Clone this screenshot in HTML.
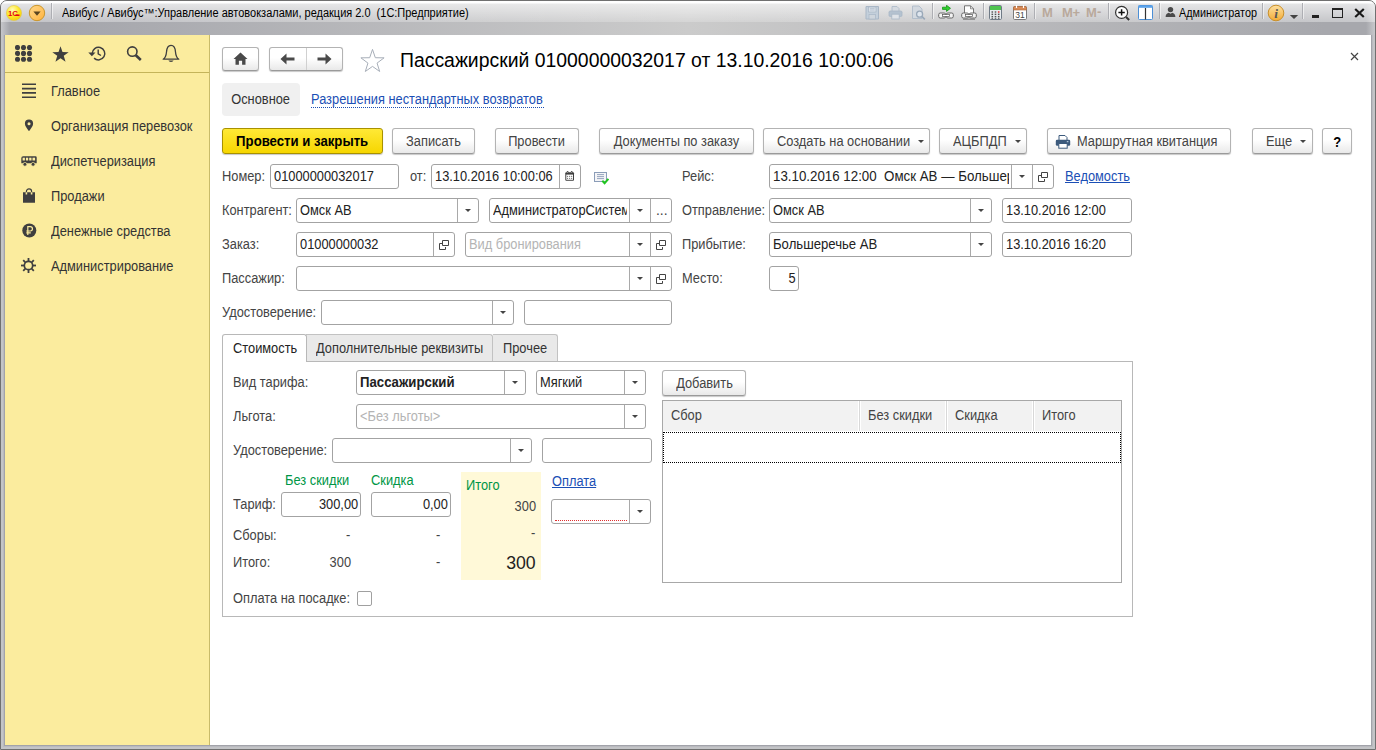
<!DOCTYPE html>
<html lang="ru">
<head>
<meta charset="utf-8">
<title>Авибус</title>
<style>
*{box-sizing:border-box;margin:0;padding:0}
html,body{width:1376px;height:750px;overflow:hidden;background:#fff}
body{position:relative;font-family:"Liberation Sans",Arial,sans-serif;font-size:13.8px;color:#333;background:#fff}
.abs,.abs>*{position:absolute}
#win{position:absolute;left:0;top:0;width:1376px;height:750px;border:1px solid #707070;border-radius:7px 7px 0 0;overflow:hidden;background:#c3c4c7}
#tbar{position:absolute;left:0;top:0;width:1374px;height:34px;background:linear-gradient(90deg,#c6c7cb 0,#a4a5ab 9px,#a4a5ab 50px,#cbcbcb 50%,#a7a8ad 1324px,#a7a8ad 1365px,#c8c9cc 1374px)}
#tbar:before{content:"";position:absolute;left:0;top:0;width:100%;height:21px;background:linear-gradient(#fff 0,#fff 2px,rgba(255,255,255,.62) 3px,rgba(255,255,255,.22) 20px,rgba(255,255,255,.2) 21px),linear-gradient(90deg,rgba(255,255,255,.2),rgba(255,255,255,0) 50%,rgba(255,255,255,.2))}
#ttl{position:absolute;left:61px;top:5px;font-size:12px;line-height:15px;white-space:pre;color:#000;transform-origin:0 0;transform:scaleX(.915)}
#side{position:absolute;left:4px;top:34px;width:205px;height:710px;background:#fbec9e;border-right:1px solid #c9bb6a}
#side .sep{position:absolute;left:0;top:37px;width:204px;height:1px;background:#c4b45a}
.mi{position:absolute;left:46px;font-size:13.8px;line-height:16px;color:#333;white-space:nowrap}
#main{position:absolute;left:209px;top:34px;width:1161px;height:710px;background:#fff}
/* everything inside #pg is in page coordinates */
#pg{position:absolute;left:-1px;top:-1px;width:1376px;height:750px}
#pg>*{position:absolute}
.btn{height:26px;padding-top:1px;border:1px solid #b3b3b3;border-bottom-color:#9a9a9a;border-radius:3px;background:linear-gradient(#fff 0,#fff 45%,#e9e9e9 100%);box-shadow:0 1px 1px rgba(0,0,0,.22);font-size:13.8px;line-height:24px;color:#444;text-align:center;white-space:nowrap}
.btn.y{background:linear-gradient(#ffe936,#f6d600);border-color:#a89100;color:#000;font-weight:bold}
.f{height:25px;border:1px solid #a3a3a3;border-radius:3px;background:#fff;font-size:13.8px;line-height:23px;color:#222;padding-left:3px;white-space:nowrap;overflow:hidden}
.f .t{position:absolute;left:3px;top:0;overflow:hidden;white-space:pre;height:23px}
.f .d{position:absolute;top:0;width:1px;height:23px;background:#a9a9a9}
.f.r{text-align:right;padding-right:2px;padding-left:0}
.ph{color:#b4b4b4}
.l{font-size:13.8px;line-height:25px;color:#444;white-space:nowrap}
.g{color:#009646}
a,.lnk,.lnk span{color:#1b4fb5;text-decoration:underline}
.xl,.xc,.xr{display:inline-block;transform:scaleX(.93);white-space:pre}
.btn.y .xc,.f b{font-weight:bold}.btn.y .xc{transform:scaleX(.955)}
.xl:has(b){transform:scaleX(.955)}
.xl{transform-origin:0 50%}.xc{transform-origin:50% 50%}.xr{transform-origin:100% 50%}
.tri{position:absolute;width:0;height:0;border-left:3px solid transparent;border-right:3px solid transparent;border-top:3px solid #444}
</style>
</head>
<body>
<div id="win">
<div id="tbar"></div>
<div id="ttl">Авибус / Авибус™:Управление автовокзалами, редакция 2.0  (1С:Предприятие)</div>
<div id="side"><div class="sep"></div>
<div class="mi" style="top:49px"><span class="xl">Главное</span></div>
<div class="mi" style="top:84px"><span class="xl">Организация перевозок</span></div>
<div class="mi" style="top:119px"><span class="xl">Диспетчеризация</span></div>
<div class="mi" style="top:154px"><span class="xl">Продажи</span></div>
<div class="mi" style="top:189px"><span class="xl">Денежные средства</span></div>
<div class="mi" style="top:224px"><span class="xl">Администрирование</span></div>
</div>
<div id="main"></div>
<div style="position:absolute;left:4px;top:34px;width:1366px;height:710px;box-shadow:0 0 0 1px #a2a3aa,0 0 0 2px #b9babf;clip-path:inset(0 -3px -3px -3px)"></div>
<div id="pg">
<div class="btn" style="left:222px;top:47px;width:37px;height:24px"></div>
<div class="btn" style="left:269px;top:47px;width:74px;height:24px"><i style="position:absolute;left:36px;top:0;width:1px;height:22px;background:#d0d0d0"></i></div>
<div id="title" style="left:400px;top:48px;font-size:19.4px;line-height:24px;color:#000;white-space:nowrap">Пассажирский 01000000032017 от 13.10.2016 10:00:06</div>
<div style="left:222px;top:83px;width:78px;height:33px;background:#f0f0f0;border-radius:4px;text-align:center;line-height:33px;color:#333"><span class="xc">Основное</span></div>
<div style="left:311px;top:91px;line-height:17px;color:#1b4fb5;border-bottom:1px dotted #1b4fb5;height:17px;white-space:nowrap;width:233px"><span class="xl">Разрешения нестандартных возвратов</span></div>
<div class="btn y" style="left:222px;top:128px;width:161px;"><span class="xc">Провести и закрыть</span></div>
<div class="btn " style="left:392px;top:128px;width:83px;"><span class="xc">Записать</span></div>
<div class="btn " style="left:495px;top:128px;width:84px;"><span class="xc">Провести</span></div>
<div class="btn " style="left:599px;top:128px;width:155px;"><span class="xc">Документы по заказу</span></div>
<div class="btn " style="left:763px;top:128px;width:167px;text-align:left;padding-left:13px"><span class="xl">Создать на основании</span><i class="tri" style="left:154px;top:11px"></i></div>
<div class="btn " style="left:939px;top:128px;width:88px;text-align:left;padding-left:13px"><span class="xl">АЦБПДП</span><i class="tri" style="left:75px;top:11px"></i></div>
<div class="btn " style="left:1047px;top:128px;width:184px;text-align:left;padding-left:29px"><span class="xl">Маршрутная квитанция</span></div>
<div class="btn " style="left:1252px;top:128px;width:61px;text-align:left;padding-left:13px"><span class="xl">Еще</span><i class="tri" style="left:47px;top:11px"></i></div>
<div class="btn " style="left:1322px;top:128px;width:30px;font-weight:bold;color:#000;font-size:14px"><span class="xc">?</span></div>
<div class="l " style="left:222px;top:164px;"><span class="xl">Номер:</span></div>
<div class="f " style="left:270px;top:164px;width:129px;"><span class="xl">01000000032017</span></div>
<div class="l " style="left:410px;top:164px;"><span class="xl">от:</span></div>
<div class="f " style="left:431px;top:164px;width:150px;"><span class="t" style="width:122px"><span class="xl">13.10.2016 10:00:06</span></span><i class="d" style="left:127px"></i></div>
<div class="l " style="left:682px;top:164px;"><span class="xl">Рейс:</span></div>
<div class="f " style="left:769px;top:164px;width:285px;white-space:pre"><span class="t" style="width:236px"><span class="xl" style="transform:scaleX(0.965)">13.10.2016 12:00  Омск АВ — Большере</span></span><i class="d" style="left:241px"></i><i class="d" style="left:262px"></i><i class="tri" style="left:249px;top:10px"></i><svg class="ic" style="position:absolute;left:268px;top:7px" width="10" height="10" viewBox="0 0 10 10"><path d="M3.5 .5h6v5h-6z" fill="#fff" stroke="#444"/><path d="M3 3.5h-2.5v6h6v-2.5" fill="none" stroke="#444"/></svg></div>
<div class="lnk" style="left:1065px;top:164px;line-height:25px"><span class="xl">Ведомость</span></div>
<div class="l " style="left:222px;top:198px;"><span class="xl">Контрагент:</span></div>
<div class="f " style="left:296px;top:198px;width:183px;"><span class="t" style="width:155px"><span class="xl">Омск АВ</span></span><i class="d" style="left:160px"></i><i class="tri" style="left:168px;top:10px"></i></div>
<div class="f " style="left:489px;top:198px;width:183px;"><span class="t" style="width:134px"><span class="xl">АдминистраторСистемы</span></span><i class="d" style="left:139px"></i><i class="d" style="left:160px"></i><i class="tri" style="left:147px;top:10px"></i><span style="position:absolute;left:166px;top:0;color:#444">...</span></div>
<div class="l " style="left:682px;top:198px;"><span class="xl">Отправление:</span></div>
<div class="f " style="left:769px;top:198px;width:223px;"><span class="t" style="width:195px"><span class="xl">Омск АВ</span></span><i class="d" style="left:200px"></i><i class="tri" style="left:208px;top:10px"></i></div>
<div class="f " style="left:1002px;top:198px;width:130px;"><span class="xl">13.10.2016 12:00</span></div>
<div class="l " style="left:222px;top:232px;"><span class="xl">Заказ:</span></div>
<div class="f " style="left:296px;top:232px;width:159px;"><span class="t" style="width:131px"><span class="xl">01000000032</span></span><i class="d" style="left:136px"></i><svg class="ic" style="position:absolute;left:142px;top:7px" width="10" height="10" viewBox="0 0 10 10"><path d="M3.5 .5h6v5h-6z" fill="#fff" stroke="#444"/><path d="M3 3.5h-2.5v6h6v-2.5" fill="none" stroke="#444"/></svg></div>
<div class="f " style="left:465px;top:232px;width:207px;"><span class="t" style="width:158px"><span class="xl"><span class="ph">Вид бронирования</span></span></span><i class="d" style="left:163px"></i><i class="d" style="left:184px"></i><i class="tri" style="left:171px;top:10px"></i><svg class="ic" style="position:absolute;left:190px;top:7px" width="10" height="10" viewBox="0 0 10 10"><path d="M3.5 .5h6v5h-6z" fill="#fff" stroke="#444"/><path d="M3 3.5h-2.5v6h6v-2.5" fill="none" stroke="#444"/></svg></div>
<div class="l " style="left:682px;top:232px;"><span class="xl">Прибытие:</span></div>
<div class="f " style="left:769px;top:232px;width:223px;"><span class="t" style="width:195px"><span class="xl" style="transform:scaleX(0.952)">Большеречье АВ</span></span><i class="d" style="left:200px"></i><i class="tri" style="left:208px;top:10px"></i></div>
<div class="f " style="left:1002px;top:232px;width:130px;"><span class="xl">13.10.2016 16:20</span></div>
<div class="l " style="left:222px;top:266px;"><span class="xl">Пассажир:</span></div>
<div class="f " style="left:296px;top:266px;width:376px;"><i class="d" style="left:332px"></i><i class="d" style="left:353px"></i><i class="tri" style="left:340px;top:10px"></i><svg class="ic" style="position:absolute;left:359px;top:7px" width="10" height="10" viewBox="0 0 10 10"><path d="M3.5 .5h6v5h-6z" fill="#fff" stroke="#444"/><path d="M3 3.5h-2.5v6h6v-2.5" fill="none" stroke="#444"/></svg></div>
<div class="l " style="left:682px;top:266px;"><span class="xl">Место:</span></div>
<div class="f r" style="left:769px;top:266px;width:30px;"><span class="xr">5</span></div>
<div class="l " style="left:222px;top:300px;"><span class="xl">Удостоверение:</span></div>
<div class="f " style="left:321px;top:300px;width:193px;"><i class="d" style="left:170px"></i><i class="tri" style="left:178px;top:10px"></i></div>
<div class="f " style="left:524px;top:300px;width:148px;"></div>
<div style="left:222px;top:361px;width:911px;height:256px;border:1px solid #b8b8b8"></div>
<div style="left:306px;top:334px;width:187px;height:27px;background:#e9e9e9;border:1px solid #c2c2c2;border-left:none;border-bottom:none;border-radius:0 3px 0 0;padding-left:10px;line-height:28px;color:#333;white-space:nowrap"><span class="xl">Дополнительные реквизиты</span></div>
<div style="left:493px;top:334px;width:65px;height:27px;background:#e9e9e9;border:1px solid #c2c2c2;border-left:none;border-bottom:none;border-radius:0 3px 0 0;padding-left:10px;line-height:28px;color:#333;white-space:nowrap"><span class="xl">Прочее</span></div>
<div style="left:222px;top:334px;width:85px;height:28px;background:#fff;border:1px solid #b8b8b8;border-bottom:none;border-radius:3px 3px 0 0;padding-left:10px;line-height:28px;color:#222;white-space:nowrap"><span class="xl">Стоимость</span></div>
<div class="l " style="left:233px;top:370px;"><span class="xl">Вид тарифа:</span></div>
<div class="f " style="left:356px;top:370px;width:170px;"><span class="t" style="width:142px"><span class="xl"><b>Пассажирский</b></span></span><i class="d" style="left:147px"></i><i class="tri" style="left:155px;top:10px"></i></div>
<div class="f " style="left:536px;top:370px;width:110px;"><span class="t" style="width:82px"><span class="xl">Мягкий</span></span><i class="d" style="left:87px"></i><i class="tri" style="left:95px;top:10px"></i></div>
<div class="l " style="left:233px;top:404px;"><span class="xl">Льгота:</span></div>
<div class="f " style="left:356px;top:404px;width:290px;"><span class="t" style="width:262px"><span class="xl"><span class="ph">&lt;Без льготы&gt;</span></span></span><i class="d" style="left:267px"></i><i class="tri" style="left:275px;top:10px"></i></div>
<div class="l " style="left:233px;top:438px;"><span class="xl">Удостоверение:</span></div>
<div class="f " style="left:332px;top:438px;width:200px;"><i class="d" style="left:177px"></i><i class="tri" style="left:185px;top:10px"></i></div>
<div class="f " style="left:542px;top:438px;width:110px;"></div>
<div style="left:461px;top:472px;width:80px;height:108px;background:#fff9d8"></div>
<div class="l g" style="left:285px;top:468px;"><span class="xl">Без скидки</span></div>
<div class="l g" style="left:371px;top:468px;"><span class="xl">Скидка</span></div>
<div class="l g" style="left:466px;top:473px;"><span class="xl">Итого</span></div>
<div class="lnk" style="left:552px;top:469px;line-height:25px"><span class="xl">Оплата</span></div>
<div class="l " style="left:233px;top:492px;"><span class="xl">Тариф:</span></div>
<div class="f r" style="left:281px;top:492px;width:80px;"><span class="xr">300,00</span></div>
<div class="f r" style="left:371px;top:492px;width:80px;"><span class="xr">0,00</span></div>
<div class="l " style="left:436px;top:494px;width:100px;text-align:right"><span class="xr">300</span></div>
<div class="f " style="left:551px;top:499px;width:100px;"><i class="d" style="left:77px"></i><i class="tri" style="left:85px;top:10px"></i><i style="position:absolute;left:3px;top:20px;width:72px;height:0;border-top:1px dotted #e03030"></i></div>
<div class="l " style="left:233px;top:523px;"><span class="xl">Сборы:</span></div>
<div class="l " style="left:346px;top:523px;"><span class="xl">-</span></div>
<div class="l " style="left:436px;top:523px;"><span class="xl">-</span></div>
<div class="l " style="left:531px;top:521px;"><span class="xl">-</span></div>
<div class="l " style="left:233px;top:550px;"><span class="xl">Итого:</span></div>
<div class="l " style="left:251px;top:550px;width:100px;text-align:right"><span class="xr">300</span></div>
<div class="l " style="left:436px;top:550px;"><span class="xl">-</span></div>
<div class="l " style="left:436px;top:550px;width:100px;text-align:right;font-size:19px;color:#222"><span class="xr">300</span></div>
<div class="l " style="left:233px;top:586px;"><span class="xl">Оплата на посадке:</span></div>
<div style="left:357px;top:591px;width:15px;height:15px;border:1px solid #a0a0a0;border-radius:2px;background:#fff"></div>
<div class="btn " style="left:662px;top:370px;width:84px;"><span class="xc">Добавить</span></div>
<div style="left:662px;top:400px;width:460px;height:183px;border:1px solid #a8a8a8;background:#fff"></div>
<div style="left:663px;top:401px;width:458px;height:30px;background:#f2f2f2"></div>
<div style="left:858px;top:401px;width:3px;height:30px;background:#fff"><i style="position:absolute;left:1px;top:0;width:1px;height:30px;background:#d8d8d8"></i></div>
<div style="left:945px;top:401px;width:3px;height:30px;background:#fff"><i style="position:absolute;left:1px;top:0;width:1px;height:30px;background:#d8d8d8"></i></div>
<div style="left:1032px;top:401px;width:3px;height:30px;background:#fff"><i style="position:absolute;left:1px;top:0;width:1px;height:30px;background:#d8d8d8"></i></div>
<div class="l " style="left:671px;top:403px;"><span class="xl">Сбор</span></div>
<div class="l " style="left:868px;top:403px;"><span class="xl">Без скидки</span></div>
<div class="l " style="left:955px;top:403px;"><span class="xl">Скидка</span></div>
<div class="l " style="left:1042px;top:403px;"><span class="xl">Итого</span></div>
<div style="left:663px;top:432px;width:458px;height:31px;border:1px dotted #000"></div>
<svg style="left:5px;top:4px" width="18" height="18" viewBox="0 0 18 18" ><defs><radialGradient id="g1c" cx=".4" cy=".3" r=".8"><stop offset="0" stop-color="#fffbc0"/><stop offset=".5" stop-color="#ffe92a"/><stop offset="1" stop-color="#f2c800"/></radialGradient></defs><circle cx="9" cy="9" r="7.6" fill="url(#g1c)" stroke="#e3c64a" stroke-width=".6"/><text x="3" y="11.9" font-family="Liberation Sans,sans-serif" font-weight="bold" font-size="7.8" fill="#e30613" letter-spacing="-.2">1С</text><path d="M10.3 11.2h4.2" stroke="#e30613" stroke-width="1.5"/></svg>
<svg style="left:28px;top:4px" width="18" height="18" viewBox="0 0 18 18" ><defs><linearGradient id="gor" x1="0" y1="0" x2="1" y2="1"><stop offset="0" stop-color="#ffd98c"/><stop offset="1" stop-color="#ffb23c"/></linearGradient></defs><circle cx="9" cy="9" r="7.7" fill="url(#gor)" stroke="#c9962e" stroke-width="1"/><path d="M5.4 7.6h7.2l-3.6 4.2z" fill="#5a4520"/></svg>
<div style="left:51px;top:3px;width:1px;height:16px;background:#adaeb3"></div><div style="left:52px;top:3px;width:1px;height:16px;background:rgba(255,255,255,.55)"></div>
<div style="left:932px;top:3px;width:1px;height:16px;background:#adaeb3"></div><div style="left:933px;top:3px;width:1px;height:16px;background:rgba(255,255,255,.55)"></div>
<div style="left:983px;top:3px;width:1px;height:16px;background:#adaeb3"></div><div style="left:984px;top:3px;width:1px;height:16px;background:rgba(255,255,255,.55)"></div>
<div style="left:1034px;top:3px;width:1px;height:16px;background:#adaeb3"></div><div style="left:1035px;top:3px;width:1px;height:16px;background:rgba(255,255,255,.55)"></div>
<div style="left:1108px;top:3px;width:1px;height:16px;background:#adaeb3"></div><div style="left:1109px;top:3px;width:1px;height:16px;background:rgba(255,255,255,.55)"></div>
<div style="left:1159px;top:3px;width:1px;height:16px;background:#adaeb3"></div><div style="left:1160px;top:3px;width:1px;height:16px;background:rgba(255,255,255,.55)"></div>
<div style="left:1262px;top:3px;width:1px;height:16px;background:#adaeb3"></div><div style="left:1263px;top:3px;width:1px;height:16px;background:rgba(255,255,255,.55)"></div>
<div style="left:1302px;top:3px;width:1px;height:16px;background:#adaeb3"></div><div style="left:1303px;top:3px;width:1px;height:16px;background:rgba(255,255,255,.55)"></div>
<svg style="left:865px;top:5px" width="15" height="15" viewBox="0 0 15 15" ><path d="M1 1.5h12.5v12.5h-12.5z" fill="#c3cfdb" stroke="#a9b7c6"/><rect x="3.5" y="2" width="7.5" height="5" fill="#d9e0e8" stroke="#a9b7c6" stroke-width=".7"/><rect x="4" y="9.5" width="6.5" height="4.5" fill="#cfd6dd" stroke="#a9b7c6" stroke-width=".7"/><path d="M5 3.5h4.5M5 5h4.5" stroke="#a9b7c6" stroke-width=".6"/></svg>
<svg style="left:888px;top:5px" width="15" height="15" viewBox="0 0 15 15" ><path d="M4 6V1.5h5l2 2V6" fill="#d6dbe1" stroke="#a9b7c6" stroke-width=".8"/><rect x="1" y="6" width="13" height="5.5" rx="1.2" fill="#b4c2d0" stroke="#a9b7c6" stroke-width=".8"/><rect x="3.8" y="9.2" width="7.4" height="4.8" fill="#dfe3e8" stroke="#a9b7c6" stroke-width=".8"/></svg>
<svg style="left:911px;top:5px" width="16" height="16" viewBox="0 0 16 16" ><path d="M1.5 1h6.5l3 3v9.5h-9.5z" fill="#d3d9e0" stroke="#a9b7c6" stroke-width=".8"/><circle cx="8.6" cy="9.2" r="3" fill="#dfe6ee" stroke="#9aa9b9" stroke-width="1.3"/><path d="M10.8 11.4l3 3" stroke="#9aa9b9" stroke-width="1.6"/></svg>
<svg style="left:938px;top:5px" width="16" height="15" viewBox="0 0 16 15" ><path d="M4.5 2.2h4v-2l4 3.1-4 3.1v-2h-4z" fill="#2fd12f" stroke="#0a8a0a" stroke-width=".7"/><rect x=".7" y="8" width="7" height="5" rx="1.6" fill="#f4f4f4" stroke="#666" stroke-width="1"/><rect x="8.3" y="8" width="7" height="5" rx="1.6" fill="#f4f4f4" stroke="#666" stroke-width="1"/><rect x="4.5" y="9.6" width="7" height="1.8" fill="#fff" stroke="#555" stroke-width=".7"/></svg>
<svg style="left:961px;top:5px" width="16" height="15" viewBox="0 0 16 15" ><path d="M3.5 8V.8h6l3 3V8" fill="#fff" stroke="#666" stroke-width=".9"/><path d="M9.5 .8v3h3" fill="none" stroke="#666" stroke-width=".7"/><rect x=".7" y="8" width="7" height="5" rx="1.6" fill="#f4f4f4" stroke="#666" stroke-width="1"/><rect x="8.3" y="8" width="7" height="5" rx="1.6" fill="#f4f4f4" stroke="#666" stroke-width="1"/><rect x="4.5" y="9.6" width="7" height="1.8" fill="#fff" stroke="#555" stroke-width=".7"/><path d="M2 14.2h12" stroke="#777" stroke-width="1"/></svg>
<svg style="left:989px;top:5px" width="13" height="15" viewBox="0 0 13 15" ><rect x=".5" y=".5" width="12" height="14" rx="1.2" fill="#e8ecf0" stroke="#6f7a86"/><rect x="1" y="1" width="11" height="4" fill="#4fc44f"/><g fill="#555"><rect x="2.5" y="6.3" width="1.6" height="1.4"/><rect x="5.7" y="6.3" width="1.6" height="1.4"/><rect x="2.5" y="8.6" width="1.6" height="1.4"/><rect x="5.7" y="8.6" width="1.6" height="1.4"/><rect x="8.9" y="8.6" width="1.6" height="1.4"/><rect x="2.5" y="10.9" width="1.6" height="1.4"/><rect x="5.7" y="10.9" width="1.6" height="1.4"/><rect x="8.9" y="10.9" width="1.6" height="1.4"/><rect x="2.5" y="12.8" width="1.6" height="1"/><rect x="5.7" y="12.8" width="1.6" height="1"/><rect x="8.9" y="12.8" width="1.6" height="1"/></g><rect x="8.9" y="6.3" width="1.6" height="1.4" fill="#e02020"/></svg>
<svg style="left:1013px;top:5px" width="14" height="15" viewBox="0 0 14 15" ><rect x=".5" y="1.5" width="13" height="13" rx="1.2" fill="#fff" stroke="#7a7a7a"/><path d="M.5 2.7a1.2 1.2 0 0 1 1.2-1.2h10.6a1.2 1.2 0 0 1 1.2 1.2v2.3h-13z" fill="#d98a55" stroke="#b06a3a" stroke-width=".6"/><path d="M3.5 0v3M10.5 0v3" stroke="#fff" stroke-width="1.2"/><text x="7" y="13" text-anchor="middle" font-family="Liberation Sans,sans-serif" font-size="8.5" fill="#444">31</text></svg>
<div style="left:1042px;top:5px;font-size:13px;line-height:16px;font-weight:bold;color:#b9a99c;letter-spacing:-.3px">M</div>
<div style="left:1062px;top:5px;font-size:13px;line-height:16px;font-weight:bold;color:#b9a99c;letter-spacing:-.3px">M+</div>
<div style="left:1086px;top:5px;font-size:13px;line-height:16px;font-weight:bold;color:#b9a99c;letter-spacing:-.3px">M<span style="position:relative;top:-1.5px;left:.5px">-</span></div>
<svg style="left:1114px;top:5px" width="17" height="16" viewBox="0 0 17 16" ><circle cx="7.6" cy="7.4" r="6" fill="#fff" stroke="#333" stroke-width="1.2"/><path d="M4.4 7.4h6.4M7.6 4.2v6.4" stroke="#111" stroke-width="1.5"/><path d="M12 12l3.2 3" stroke="#333" stroke-width="2"/></svg>
<svg style="left:1138px;top:5px" width="15" height="15" viewBox="0 0 15 15" ><rect x=".5" y=".5" width="14" height="14" rx="1" fill="#fff" stroke="#4b8fd6"/><rect x=".5" y=".5" width="14" height="2.3" fill="#5aa2ea"/><path d="M7.5 3v11.5" stroke="#333" stroke-width="1.2"/></svg>
<svg style="left:1165px;top:6px" width="11" height="12" viewBox="0 0 11 12" ><circle cx="5.5" cy="3.6" r="2.7" fill="#4a4a4a"/><path d="M.6 11c0-2.6 1.6-4 3.2-4.3l1.7 1 1.7-1c1.6.3 3.2 1.7 3.2 4.3z" fill="#4a4a4a"/></svg>
<div id="usr" style="left:1179px;top:6px;font-size:12px;line-height:15px;color:#000;white-space:nowrap;transform-origin:0 0;transform:scaleX(.9)">Администратор</div>
<svg style="left:1267px;top:4px" width="18" height="18" viewBox="0 0 18 18" ><defs><linearGradient id="gin" x1="0" y1="0" x2="0" y2="1"><stop offset="0" stop-color="#fde0a0"/><stop offset="1" stop-color="#f3ab35"/></linearGradient></defs><circle cx="9" cy="9" r="7.8" fill="url(#gin)" stroke="#c8902c" stroke-width="1"/><text x="9.2" y="13.6" text-anchor="middle" font-family="Liberation Serif,serif" font-style="italic" font-weight="bold" font-size="13.5" fill="#575757">i</text></svg>
<svg style="left:1289px;top:14px" width="10" height="6" viewBox="0 0 10 6" ><path d="M.8 1h8.4L5 5z" fill="#444"/></svg>
<div style="left:1312px;top:15px;width:7px;height:2.5px;background:#222"></div>
<div style="left:1332px;top:8px;width:11px;height:10px;border:1px solid #222;border-top-width:2px"></div>
<svg style="left:1354px;top:8px" width="11" height="10" viewBox="0 0 11 10" ><path d="M1.2 1l8.6 8M9.8 1l-8.6 8" stroke="#1a1a1a" stroke-width="2.2"/></svg>
<svg style="left:15px;top:45px" width="18" height="18" viewBox="0 0 18 18" ><g fill="#3f3f3f"><circle cx="2.5" cy="2.5" r="2.55"/><circle cx="2.5" cy="8.4" r="2.55"/><circle cx="2.5" cy="14.3" r="2.55"/><circle cx="8.5" cy="2.5" r="2.55"/><circle cx="8.5" cy="8.4" r="2.55"/><circle cx="8.5" cy="14.3" r="2.55"/><circle cx="14.5" cy="2.5" r="2.55"/><circle cx="14.5" cy="8.4" r="2.55"/><circle cx="14.5" cy="14.3" r="2.55"/></g></svg>
<svg style="left:52px;top:45px" width="18" height="18" viewBox="0 0 18 18" ><polygon points="8.50,1.20 10.50,7.05 16.68,7.14 11.73,10.85 13.55,16.76 8.50,13.20 3.45,16.76 5.27,10.85 0.32,7.14 6.50,7.05" fill="#3f3f3f"/></svg>
<svg style="left:87px;top:45px" width="20" height="18" viewBox="0 0 20 18" ><path d="M5.2 8.5a6.3 6.3 0 1 1 1.9 4.6" fill="none" stroke="#3f3f3f" stroke-width="1.5"/><path d="M1.3 7.6h7.2l-3.6 3.6z" fill="#3f3f3f"/><path d="M11.2 4.6v4.2l2.8 1.7" fill="none" stroke="#3f3f3f" stroke-width="1.4"/></svg>
<svg style="left:126px;top:45px" width="18" height="18" viewBox="0 0 18 18" ><circle cx="6.3" cy="6.6" r="4.7" fill="none" stroke="#3f3f3f" stroke-width="1.6"/><path d="M9.8 10.2l5 4.8" stroke="#3f3f3f" stroke-width="2.6"/></svg>
<svg style="left:162px;top:44px" width="18" height="19" viewBox="0 0 18 19" ><path d="M1.2 15.2c2.4-1.6 3-3.6 3.3-7.2C4.8 3.6 6.6 1.4 9 1.4s4.2 2.2 4.5 6.6c.3 3.6.9 5.6 3.3 7.2z" fill="#f6e89b" stroke="#3f3f3f" stroke-width="1.3" stroke-linejoin="round"/><path d="M6.4 16.6a2.7 1.9 0 0 0 5.2 0z" fill="#3f3f3f"/></svg>
<svg style="left:22px;top:83px" width="14" height="15" viewBox="0 0 14 15" ><path d="M0 1.3h14M0 5.6h14M0 9.9h14M0 14.2h14" stroke="#3f3f3f" stroke-width="1.6"/></svg>
<svg style="left:24px;top:119px" width="10" height="13" viewBox="0 0 10 13" ><path d="M5 .6a4.1 4.1 0 0 1 4.1 4.1c0 2.6-2.6 5-4.1 7.6C3.500 9.7.9 7.300.9 4.700A4.100 4.100 0 0 1 5 .6z" fill="#3f3f3f"/><circle cx="5" cy="4.700" r="1.500" fill="#fbec9e"/></svg>
<svg style="left:21px;top:156px" width="16" height="11" viewBox="0 0 16 11" ><path d="M.3 2.200a1.900 1.900 0 0 1 1.900-1.900h12.300a1.200 1.200 0 0 1 1.200 1.200v5.700h-15.400z" fill="#3f3f3f"/><g fill="#fbec9e"><rect x="1.600" y="1.700" width="2.300" height="2.800"/><rect x="4.900" y="1.700" width="2.300" height="2.800"/><rect x="8.200" y="1.700" width="2.300" height="2.800"/><rect x="11.500" y="1.700" width="2.600" height="2.800"/></g><circle cx="3.900" cy="8.300" r="1.900" fill="#3f3f3f" stroke="#fbec9e" stroke-width=".7"/><circle cx="12.100" cy="8.300" r="1.900" fill="#3f3f3f" stroke="#fbec9e" stroke-width=".7"/></svg>
<svg style="left:23px;top:188px" width="12" height="15" viewBox="0 0 12 15" ><path d="M0 4.200h12v10.600h-12z" fill="#3f3f3f"/><path d="M3.400 6.600v-3.200a2.600 2.600 0 0 1 5.200 0v3.200" fill="none" stroke="#3f3f3f" stroke-width="1.200"/><path d="M2.600 4.200v2.400h1.600v-2.400zM7.800 4.200v2.400h1.600v-2.400z" fill="#fbec9e"/></svg>
<svg style="left:22px;top:223px" width="15" height="15" viewBox="0 0 15 15" ><circle cx="7.300" cy="7.500" r="7" fill="#3f3f3f"/><path d="M5.800 12v-8.300h2.500a2.100 2.100 0 0 1 0 4.300h-4M4.300 9.900h4.500" fill="none" stroke="#fbec9e" stroke-width="1.200"/></svg>
<svg style="left:21px;top:258px" width="15" height="15" viewBox="0 0 15 15" ><g fill="#3f3f3f"><rect x="6.600" y="0" width="1.800" height="3" transform="rotate(0 7.500 7.500)"/><rect x="6.600" y="0" width="1.800" height="3" transform="rotate(45 7.500 7.500)"/><rect x="6.600" y="0" width="1.800" height="3" transform="rotate(90 7.500 7.500)"/><rect x="6.600" y="0" width="1.800" height="3" transform="rotate(135 7.500 7.500)"/><rect x="6.600" y="0" width="1.800" height="3" transform="rotate(180 7.500 7.500)"/><rect x="6.600" y="0" width="1.800" height="3" transform="rotate(225 7.500 7.500)"/><rect x="6.600" y="0" width="1.800" height="3" transform="rotate(270 7.500 7.500)"/><rect x="6.600" y="0" width="1.800" height="3" transform="rotate(315 7.500 7.500)"/></g><circle cx="7.500" cy="7.500" r="4.200" fill="none" stroke="#3f3f3f" stroke-width="1.700"/></svg>
<svg style="left:233px;top:52px" width="15" height="13" viewBox="0 0 15 13" ><path d="M7.500 .4l7 6.600h-2v5.800h-3.400v-4h-3.200v4h-3.400v-5.800h-2z" fill="#4a4a4a"/></svg>
<svg style="left:280px;top:53px" width="15" height="12" viewBox="0 0 15 12" ><path d="M.5 6l6-5.600v4h8v3.200h-8v4z" fill="#4a4a4a"/></svg>
<svg style="left:317px;top:53px" width="15" height="12" viewBox="0 0 15 12" ><path d="M14.500 6l-6-5.600v4h-8v3.200h8v4z" fill="#4a4a4a"/></svg>
<svg style="left:359px;top:47px" width="27" height="26" viewBox="0 0 27 26" ><polygon points="13.50,2.40 16.32,10.72 25.10,10.83 18.07,16.08 20.67,24.47 13.50,19.40 6.33,24.47 8.93,16.08 1.90,10.83 10.68,10.72" fill="#fff" stroke="#a7aeb8" stroke-width="1"/></svg>
<svg style="left:1350px;top:52px" width="9" height="9" viewBox="0 0 9 9" ><path d="M1 1l7 7M8 1l-7 7" stroke="#444" stroke-width="1.200"/></svg>
<svg style="left:565px;top:171px" width="10" height="10" viewBox="0 0 10 10" ><rect x=".3" y="1.300" width="8.700" height="8.500" rx="1" fill="#3e3e3e"/><rect x="1.300" y="3.600" width="6.700" height="5.200" fill="#fff"/><circle cx="2.600" cy="1" r=".9" fill="#3e3e3e"/><circle cx="6.700" cy="1" r=".9" fill="#3e3e3e"/><circle cx="2.600" cy="1.200" r=".45" fill="#fff"/><circle cx="6.700" cy="1.200" r=".45" fill="#fff"/><g fill="#3e3e3e"><circle cx="2.600" cy="5.300" r=".55"/><circle cx="4.650" cy="5.300" r=".55"/><circle cx="6.700" cy="5.300" r=".55"/><circle cx="2.600" cy="7.300" r=".55"/><circle cx="4.650" cy="7.300" r=".55"/><circle cx="6.700" cy="7.300" r=".55"/></g></svg>
<svg style="left:594px;top:171px" width="16" height="14" viewBox="0 0 16 14" ><rect x=".5" y="1.500" width="12" height="9" fill="#f5f5f7" stroke="#8b9db8"/><path d="M3 3.600h7M3 5.600h7M3 7.600h7" stroke="#8b9db8" stroke-width=".9"/><path d="M8.300 9.800l2.300 2.400 3.800-4.400" fill="none" stroke="#20c420" stroke-width="2"/></svg>
<svg style="left:1055px;top:134px" width="16" height="15" viewBox="0 0 16 15" ><path d="M4 6v-4.500h6l2 2v2.500" fill="#fff" stroke="#3c5a7c" stroke-width="1"/><rect x=".8" y="5.800" width="14.400" height="6" rx="1.300" fill="#3c5a7c"/><rect x="3.800" y="9.500" width="8.400" height="4.700" fill="#fff" stroke="#3c5a7c" stroke-width="1"/><rect x="11.800" y="7.200" width="1.600" height="1" fill="#cfe0f0"/></svg>
</div>
</div>
</body>
</html>
